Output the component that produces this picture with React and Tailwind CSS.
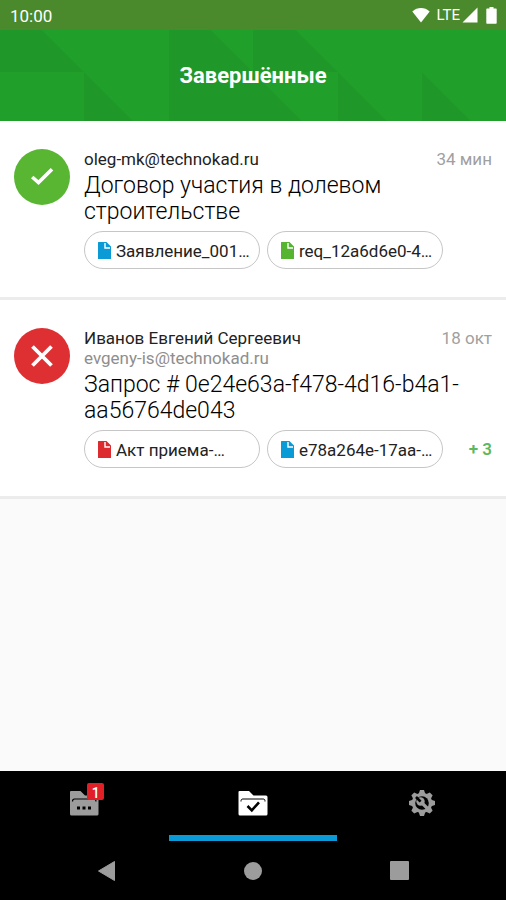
import React, { useState } from 'react';

const documents = [
  {
    id: 1,
    status: 'done',
    sender: 'oleg-mk@technokad.ru',
    time: '34 мин',
    title: 'Договор участия в долевом строительстве',
    files: [
      { name: 'Заявление_001…', color: 'text-[#0a9bd6]' },
      { name: 'req_12a6d6e0-4…', color: 'text-[#56b431]' },
    ],
    more: 0,
  },
  {
    id: 2,
    status: 'rejected',
    sender: 'Иванов Евгений Сергеевич',
    email: 'evgeny-is@technokad.ru',
    time: '18 окт',
    title: 'Запрос # 0e24e63a-f478-4d16-b4a1-aa56764de043',
    files: [
      { name: 'Акт приема-…', color: 'text-[#dd2c30]' },
      { name: 'e78a264e-17aa-…', color: 'text-[#0a9bd6]' },
    ],
    more: 3,
  },
];

const StatusBar = () => (
  <div className="flex h-[30px] items-center justify-between bg-[#4a8a2c] pr-[9px] pl-[10px] text-white">
    <span className="pt-px text-[17px] leading-5">10:00</span>
    <div className="flex items-center">
      <svg className="mr-1.5 h-4 w-[18px]" viewBox="0 0 19 16" fill="currentColor">
        <path d="M9.5 15.8 0.3 4.2C3 1.8 6.2 0.6 9.5 0.6s6.500 1.200 9.200 3.600Z" />
      </svg>
      <span className="mr-0.5 text-[15px] leading-5">LTE</span>
      <svg className="mr-2 h-4 w-4" viewBox="0 0 16 16" fill="currentColor">
        <path d="M0.500 15.500 15.500 0.500v15Z" />
      </svg>
      <svg className="h-[17px] w-[11px]" viewBox="0 0 11 17" fill="currentColor">
        <path d="M3.500 0h4v1.500H10a0.700 0.700 0 0 1 .7.7v13.800a0.700 0.700 0 0 1-.7.7H1a0.700 0.700 0 0 1-.7-.7V2.200A0.700 0.700 0 0 1 1 1.500h2.500Z" />
      </svg>
    </div>
  </div>
);

const Header = () => (
  <header className="relative flex h-[91px] items-center justify-center overflow-hidden bg-[#20a02b]">
    <svg
      className="absolute inset-0 h-full w-full"
      viewBox="0 0 506 91"
      preserveAspectRatio="xMinYMin slice"
      fill="#1f9729"
    >
      <path d="M0 0h42l42 42H0Z" />
      <path d="M84 42l49 49H84Z" />
      <path d="M169 0h42l91 91H169Z" />
      <path d="M253 0h43l42 42h-85Z" />
      <path d="M338 42l49 49h-49Z" />
      <path d="M422 42l49 49h-49Z" />
    </svg>
    <h1 className="relative text-[22px] leading-7 font-bold text-white">Завершённые</h1>
  </header>
);

const StatusIcon = ({ status }) => {
  if (status === 'done') {
    return (
      <div className="flex h-14 w-14 shrink-0 items-center justify-center rounded-full bg-[#58b633]">
        <svg className="h-6 w-6" viewBox="0 0 24 24" fill="none" stroke="white" strokeWidth="3.600">
          <path d="M2.200 12 8.500 17.600 22 4.200" />
        </svg>
      </div>
    );
  }
  return (
    <div className="flex h-14 w-14 shrink-0 items-center justify-center rounded-full bg-[#de3033]">
      <svg className="h-6 w-6" viewBox="0 0 24 24" fill="none" stroke="white" strokeWidth="3.800">
        <path d="M2.500 2.500l19 19M21.500 2.500l-19 19" />
      </svg>
    </div>
  );
};

const FileChip = ({ file }) => (
  <button
    type="button"
    className="flex h-[38px] w-[176px] items-center gap-[5px] rounded-full border border-[#c6c6c6] bg-white pl-[13px] text-[17px] text-[#222222]"
  >
    <svg className={`h-[17px] w-[13px] shrink-0 ${file.color}`} viewBox="0 0 13 17" fill="currentColor">
      <path d="M0.500 0h8L13 4.500V16.500a.5.5 0 0 1-.5.5h-12a.5.5 0 0 1-.5-.5v-16a.5.5 0 0 1 .5-.5Z" />
      <path d="M7 1v5h5" fill="none" stroke="white" strokeWidth="1.400" />
    </svg>
    <span className="pt-[3px] whitespace-nowrap">{file.name}</span>
  </button>
);

const DocumentItem = ({ item }) => (
  <li className="flex gap-3.5 border-b-3 border-[#ececed] bg-white px-3.5 py-7">
    <StatusIcon status={item.status} />
    <div className="min-w-0 flex-1">
      <div className="flex justify-between text-[17px] leading-5">
        <span className="text-[#222222]">{item.sender}</span>
        <span className="text-[#a0a0a0]">{item.time}</span>
      </div>
      {item.email && <p className="text-[17px] leading-5 text-[#8e8e8e]">{item.email}</p>}
      <h2 className="mt-1 max-w-[380px] text-[23px] leading-[26px] font-light text-black">{item.title}</h2>
      <div className="mt-1.5 flex items-center gap-[7px]">
        {item.files.map((file) => (
          <FileChip key={file.name} file={file} />
        ))}
        {item.more > 0 && (
          <span className="ml-auto text-[17px] leading-5 font-semibold text-[#5cb85c]">+ {item.more}</span>
        )}
      </div>
    </div>
  </li>
);

const FolderDots = () => (
  <svg className="h-[26px] w-[30px]" viewBox="0 0 30 26">
    <path d="M1 2a1 1 0 0 1 1-1h9.500L16 5.500h12a1.500 1.500 0 0 1 1.500 1.500v17a1.500 1.500 0 0 1-1.500 1.500H2.500A1.500 1.500 0 0 1 1 24Z" fill="#9c9c9c" />
    <path d="M3.500 11.500c0-2 .5-2.500 2-2.500h19.500c1.500 0 2 .5 2 2.500" fill="none" stroke="black" strokeWidth="1.200" />
    <path d="M8 16.500h3v3H8ZM13.500 16.500h3v3h-3ZM19 16.500h3v3h-3Z" />
  </svg>
);

const FolderCheck = () => (
  <svg className="h-[26px] w-[30px]" viewBox="0 0 30 26">
    <path d="M0.500 2a1 1 0 0 1 1-1H11l4.500 4.500h12.500a1.500 1.500 0 0 1 1.500 1.500v17a1.500 1.500 0 0 1-1.500 1.500H2A1.500 1.500 0 0 1 .5 24Z" fill="white" />
    <path d="M3 11.500c0-2 .5-2.500 2-2.500h20c1.500 0 2 .5 2 2.500" fill="none" stroke="black" strokeWidth="1" />
    <path d="M9.500 16l4.300 4.300 7.200-8" fill="none" stroke="black" strokeWidth="2.600" />
  </svg>
);

const teeth = [0, 45, 90, 135, 180, 225, 270, 315];

const GearWrench = () => (
  <svg className="h-[26px] w-[28px]" viewBox="0 0 28 26">
    <g fill="#9c9c9c">
      <circle cx="14" cy="13" r="10.200" />
      {teeth.map((angle) => (
        <path key={angle} d="M12 0h4l1.500 4.500h-7Z" transform={`rotate(${angle} 14 13)`} />
      ))}
    </g>
    <circle cx="14" cy="13" r="6.800" fill="black" />
    <path d="M13 12l6.500 6.500" stroke="#9c9c9c" strokeWidth="3.200" />
    <circle cx="12.500" cy="11.500" r="4.200" fill="#9c9c9c" />
    <path d="M12.600 11.600 8 7" stroke="black" strokeWidth="2.600" />
  </svg>
);

const tabs = [
  { id: 'active', label: 'В работе', Icon: FolderDots, badge: 1 },
  { id: 'finished', label: 'Завершённые', Icon: FolderCheck },
  { id: 'settings', label: 'Настройки', Icon: GearWrench },
];

const TabBar = () => {
  const [active, setActive] = useState('finished');

  return (
    <nav className="grid grid-cols-3">
      {tabs.map(({ id, label, Icon, badge }) => (
        <button
          key={id}
          type="button"
          aria-label={label}
          onClick={() => setActive(id)}
          className={`flex h-[70px] justify-center border-b-6 pt-[19px] ${
            active === id ? 'border-[#0a9bd6]' : 'border-transparent'
          }`}
        >
          <span className="relative h-[26px]">
            <Icon />
            {badge && (
              <span className="absolute -top-[7px] left-[18px] flex h-[17px] w-[17px] items-center justify-center rounded-xs bg-[#e01f26] pt-0.5 text-sm leading-4 font-medium text-white">
                {badge}
              </span>
            )}
          </span>
        </button>
      ))}
    </nav>
  );
};

const SystemNav = () => (
  <div className="flex h-[59px] items-center justify-between px-[97px] text-[#9c9c9c]">
    <button type="button" aria-label="Назад">
      <svg className="h-5 w-[19px]" viewBox="0 0 19 20" fill="currentColor" stroke="currentColor" strokeLinejoin="round">
        <path d="M17.500 0.500v19L1.500 10Z" />
      </svg>
    </button>
    <button type="button" aria-label="Домой">
      <svg className="h-[18px] w-[18px]" viewBox="0 0 18 18" fill="currentColor">
        <circle cx="9" cy="9" r="9" />
      </svg>
    </button>
    <button type="button" aria-label="Недавние">
      <svg className="h-[19px] w-[19px]" viewBox="0 0 19 19" fill="currentColor">
        <rect width="19" height="19" rx="1" />
      </svg>
    </button>
  </div>
);

const App = () => {
  return (
    <div className="flex min-h-screen flex-col bg-[#fafafa] font-['Roboto',sans-serif]">
      <StatusBar />
      <Header />
      <main className="flex-1">
        <ul>
          {documents.map((item) => (
            <DocumentItem key={item.id} item={item} />
          ))}
        </ul>
      </main>
      <footer className="bg-black">
        <TabBar />
        <SystemNav />
      </footer>
    </div>
  );
};

export default App;
